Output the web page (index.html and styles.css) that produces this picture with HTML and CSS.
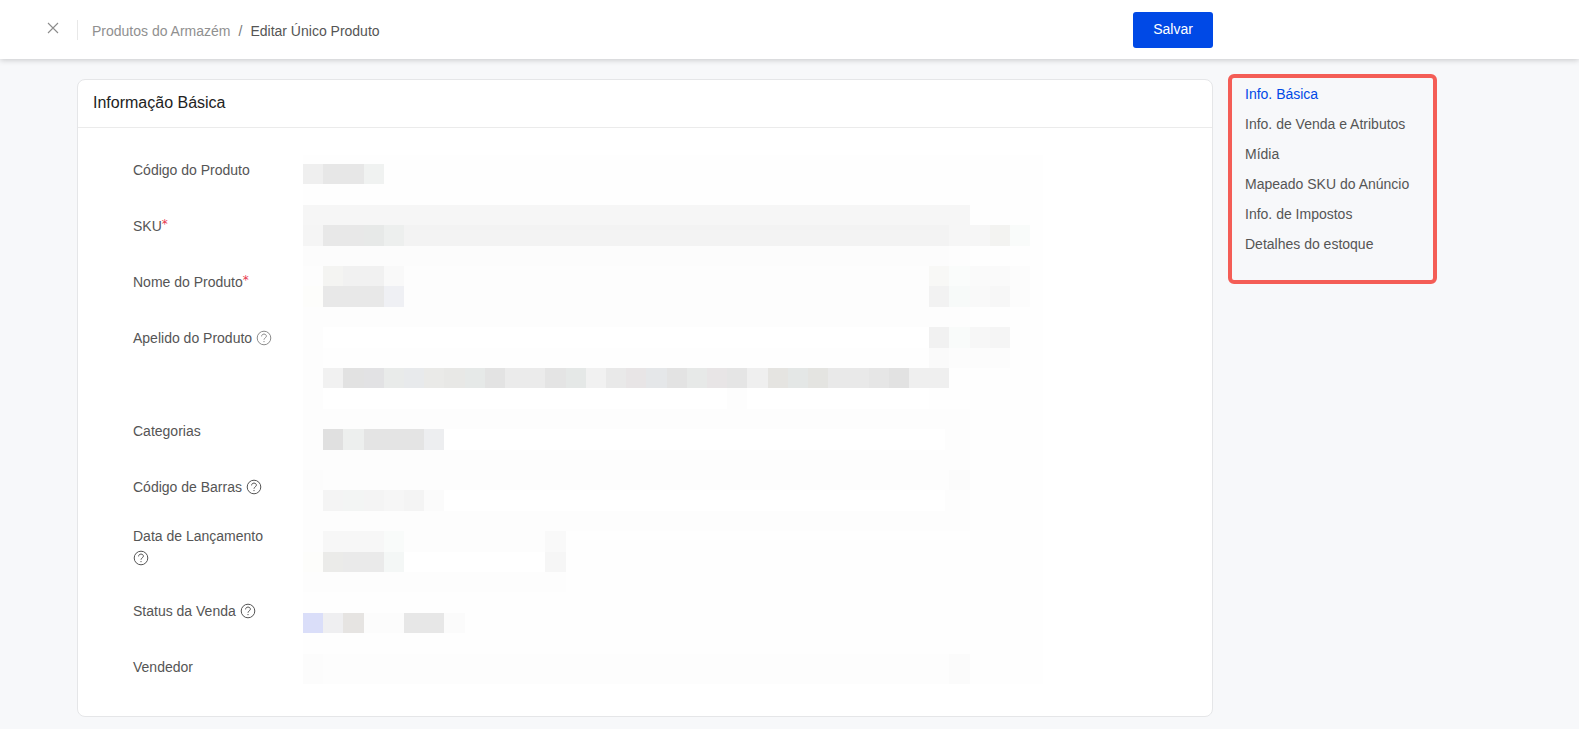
FILE: index.html
```html
<!DOCTYPE html>
<html lang="pt-BR">
<head>
<meta charset="utf-8">
<title>Editar Único Produto</title>
<link rel="stylesheet" href="styles.css">
</head>
<body>
<svg class="defs" aria-hidden="true">
  <symbol id="help" viewBox="0 0 16 16">
    <circle cx="8" cy="8" r="6.8" fill="none" stroke="currentColor" stroke-width="1"/>
    <path d="M5.6 6.400C5.600 4.900 6.600 4.100 8 4.100s2.400.8 2.400 2.100c0 1.600-2.400 1.700-2.400 3.500" fill="none" stroke="currentColor" stroke-width="1"/>
    <circle cx="8" cy="11.600" r=".7" fill="currentColor"/>
  </symbol>
</svg>
<header class="topbar">
  <button class="close" type="button" aria-label="Fechar">
    <svg viewBox="0 0 12 12" width="12" height="12"><path d="M1 1l10 10M11 1L1 11" stroke="currentColor" stroke-width="1.1" fill="none"/></svg>
  </button>
  <nav class="crumbs" aria-label="Navegação">
    <a class="crumb" href="#">Produtos do Armazém</a>
    <span class="slash">/</span>
    <span class="current">Editar Único Produto</span>
  </nav>
  <button class="save" type="button">Salvar</button>
</header>
<div class="page">
  <main class="card" id="basica">
    <h1 class="card-title">Informação Básica</h1>
    <div class="form">
      <div class="labels">
        <div class="label">Código do Produto</div>
        <div class="label">SKU<span class="req">*</span></div>
        <div class="label">Nome do Produto<span class="req">*</span></div>
        <div class="label label-area">Apelido do Produto <svg class="help help-light"><use href="#help"/></svg></div>
        <div class="label">Categorias</div>
        <div class="label">Código de Barras <svg class="help"><use href="#help"/></svg></div>
        <div class="label label-wrap">Data de Lançamento <svg class="help"><use href="#help"/></svg></div>
        <div class="label">Status da Venda <svg class="help"><use href="#help"/></svg></div>
        <div class="label">Vendedor</div>
      </div>
      <svg class="mosaic" viewBox="0 0 740 529" shape-rendering="crispEdges" aria-hidden="true">
        <rect width="740" height="529" fill="#fefefe"/>
        <g transform="translate(0 9) scale(20.200 20.400)">
          <!-- field areas -->
          <rect x="0" y="4" width="33" height="14" fill="#fdfdfd"/>
          <rect x="1" y="8" width="30" height="1" fill="#fff"/>
          <rect x="1" y="9" width="30" height="1" fill="#fefefe"/>
          <rect x="31" y="10" width="2" height="2" fill="#fefefe"/>
          <rect x="1" y="11" width="30" height="1" fill="#fff"/>
          <rect x="21" y="11" width="1" height="1" fill="#fdfdfd"/>
          <rect x="7" y="13" width="24.800" height="1" fill="#fff"/>
          <rect x="7" y="16" width="24.800" height="1" fill="#fff"/>
          <rect x="0" y="15" width="1" height="1" fill="#fcfcfc"/>
          <rect x="32" y="15" width="1" height="1" fill="#fbfbfb"/>
          <rect x="0" y="18" width="13" height="3" fill="#fdfdfd"/>
          <rect x="4" y="19" width="8" height="1" fill="#fff"/>
          <!-- product code -->
          <rect x="0" y="0" width="1" height="1" fill="#efefef"/>
          <rect x="1" y="0" width="2" height="1" fill="#e7e7e7"/>
          <rect x="3" y="0" width="1" height="1" fill="#f0f2f1"/>
          <!-- SKU -->
          <rect x="0" y="2" width="33" height="1" fill="#f6f6f6"/>
          <rect x="0" y="3" width="1" height="1" fill="#f5f5f5"/>
          <rect x="1" y="3" width="31" height="1" fill="#f3f3f3"/>
          <rect x="1" y="3" width="2" height="1" fill="#e8e8e8"/>
          <rect x="3" y="3" width="1" height="1" fill="#e7e9e8"/>
          <rect x="4" y="3" width="1" height="1" fill="#edefee"/>
          <rect x="32" y="3" width="2" height="1" fill="#f6f6f6"/>
          <rect x="34" y="3" width="1" height="1" fill="#f3f3f1"/>
          <rect x="35" y="3" width="1" height="1" fill="#f9fbfa"/>
          <rect x="0" y="4" width="32" height="1" fill="#fcfcfc"/>
          <!-- product name -->
          <rect x="1" y="5" width="1" height="1" fill="#f4f4f2"/>
          <rect x="2" y="5" width="2" height="1" fill="#f1f1f1"/>
          <rect x="4" y="5" width="1" height="1" fill="#f9f9f9"/>
          <rect x="0" y="6" width="1" height="1" fill="#fdfdfb"/>
          <rect x="1" y="6" width="3" height="1" fill="#e8e8e8"/>
          <rect x="4" y="6" width="1" height="1" fill="#eff0f4"/>
          <rect x="31" y="5" width="1" height="1" fill="#f8f8f6"/>
          <rect x="32" y="5" width="1" height="1" fill="#fafcfb"/>
          <rect x="33" y="5" width="2" height="1" fill="#fafafa"/>
          <rect x="35" y="5" width="1" height="2" fill="#fcfcfc"/>
          <rect x="31" y="6" width="1" height="1" fill="#f2f2f2"/>
          <rect x="32" y="6" width="1" height="1" fill="#f7faf9"/>
          <rect x="33" y="6" width="1" height="1" fill="#f9f9f9"/>
          <rect x="34" y="6" width="1" height="1" fill="#f7f7f7"/>
          <!-- nickname -->
          <rect x="31" y="8" width="1" height="1" fill="#f1f1f1"/>
          <rect x="32" y="8" width="1" height="1" fill="#f9fbfa"/>
          <rect x="33" y="8" width="1" height="1" fill="#f7f7f7"/>
          <rect x="34" y="8" width="1" height="1" fill="#f5f5f5"/>
          <rect x="31" y="9" width="1" height="1" fill="#fafafa"/>
          <rect x="32" y="9" width="3" height="1" fill="#fcfcfc"/>
          <rect x="1" y="10" width="1" height="1" fill="#f1f1f1"/>
          <rect x="2" y="10" width="1" height="1" fill="#e2e2e2"/>
          <rect x="3" y="10" width="1" height="1" fill="#e2e2e4"/>
          <rect x="4" y="10" width="1" height="1" fill="#e9ebea"/>
          <rect x="5" y="10" width="1" height="1" fill="#e8eaec"/>
          <rect x="6" y="10" width="1" height="1" fill="#eaeae8"/>
          <rect x="7" y="10" width="1" height="1" fill="#e8e8e6"/>
          <rect x="8" y="10" width="1" height="1" fill="#e6e9e8"/>
          <rect x="9" y="10" width="1" height="1" fill="#e3e3e3"/>
          <rect x="10" y="10" width="2" height="1" fill="#ebebeb"/>
          <rect x="12" y="10" width="1" height="1" fill="#e4e4e4"/>
          <rect x="13" y="10" width="1" height="1" fill="#e5e8e7"/>
          <rect x="14" y="10" width="1" height="1" fill="#f1f1f1"/>
          <rect x="15" y="10" width="1" height="1" fill="#e9e9e9"/>
          <rect x="16" y="10" width="1" height="1" fill="#e8e5e6"/>
          <rect x="17" y="10" width="1" height="1" fill="#e5e7e9"/>
          <rect x="18" y="10" width="1" height="1" fill="#e3e3e3"/>
          <rect x="19" y="10" width="1" height="1" fill="#e7e9e8"/>
          <rect x="20" y="10" width="1" height="1" fill="#e8e5e6"/>
          <rect x="21" y="10" width="1" height="1" fill="#e5e5e5"/>
          <rect x="22" y="10" width="1" height="1" fill="#efefef"/>
          <rect x="23" y="10" width="1" height="1" fill="#e5e4e1"/>
          <rect x="24" y="10" width="1" height="1" fill="#e4e7e6"/>
          <rect x="25" y="10" width="1" height="1" fill="#e4e4e1"/>
          <rect x="26" y="10" width="2" height="1" fill="#e9e9e9"/>
          <rect x="28" y="10" width="1" height="1" fill="#e6e6e6"/>
          <rect x="29" y="10" width="1" height="1" fill="#e2e2e2"/>
          <rect x="30" y="10" width="2" height="1" fill="#efefef"/>
          <!-- categories -->
          <rect x="1" y="13" width="1" height="1" fill="#e0e0e0"/>
          <rect x="2" y="13" width="1" height="1" fill="#edefee"/>
          <rect x="3" y="13" width="3" height="1" fill="#e4e4e4"/>
          <rect x="6" y="13" width="1" height="1" fill="#edeef0"/>
          <!-- barcode -->
          <rect x="1" y="16" width="1" height="1" fill="#f4f4f4"/>
          <rect x="2" y="16" width="1" height="1" fill="#f3f5f4"/>
          <rect x="3" y="16" width="1" height="1" fill="#f4f4f4"/>
          <rect x="4" y="16" width="1" height="1" fill="#f6f6f6"/>
          <rect x="5" y="16" width="1" height="1" fill="#f4f4f4"/>
          <rect x="6" y="16" width="1" height="1" fill="#fbfbfb"/>
          <!-- release date -->
          <rect x="1" y="18" width="3" height="1" fill="#f7f7f7"/>
          <rect x="4" y="18" width="1" height="1" fill="#f9fbfa"/>
          <rect x="0" y="19" width="1" height="1" fill="#fdfdfb"/>
          <rect x="1" y="19" width="1" height="1" fill="#ebebe9"/>
          <rect x="2" y="19" width="2" height="1" fill="#eaeaea"/>
          <rect x="4" y="19" width="1" height="1" fill="#f4f7f6"/>
          <rect x="12" y="18" width="1" height="1" fill="#f9f9f9"/>
          <rect x="12" y="19" width="1" height="1" fill="#f6f6f6"/>
          <!-- sale status -->
          <rect x="0" y="22" width="1" height="1" fill="#dadef9"/>
          <rect x="1" y="22" width="1" height="1" fill="#efeff1"/>
          <rect x="2" y="22" width="1" height="1" fill="#e6e4e2"/>
          <rect x="3" y="22" width="2" height="1" fill="#fcfcfc"/>
          <rect x="5" y="22" width="2" height="1" fill="#e7e7e7"/>
          <rect x="7" y="22" width="1" height="1" fill="#fbfbfb"/>
          <!-- seller -->
          <rect x="0" y="24" width="33" height="1.500" fill="#fdfdfd"/>
          <rect x="0" y="24" width="1" height="1.500" fill="#fcfcfc"/>
          <rect x="32" y="24" width="1" height="1.500" fill="#fbfbfb"/>
        </g>
      </svg>
    </div>
  </main>
  <aside class="side">
    <nav class="anchors" aria-label="Seções">
      <a class="anchor active" href="#basica">Info. Básica</a>
      <a class="anchor" href="#">Info. de Venda e Atributos</a>
      <a class="anchor" href="#">Mídia</a>
      <a class="anchor" href="#">Mapeado SKU do Anúncio</a>
      <a class="anchor" href="#">Info. de Impostos</a>
      <a class="anchor" href="#">Detalhes do estoque</a>
    </nav>
  </aside>
</div>
</body>
</html>
```
FILE: styles.css
```css
* {
  box-sizing: border-box;
}

body {
  margin: 0;
  background: #f7f8fa;
  color: #555;
  font: 14px/22px "Liberation Sans", Arial, sans-serif;
}

a {
  color: inherit;
  text-decoration: none;
}

button {
  border: 0;
  padding: 0;
  font: inherit;
  cursor: pointer;
}

.defs {
  display: block;
  width: 0;
  height: 0;
}

.topbar {
  display: flex;
  align-items: center;
  min-height: 59px;
  padding-right: 366px;
  background: #fff;
  box-shadow: 0 1px 6px rgba(0, 0, 0, 0.2);
}

.close {
  display: flex;
  justify-content: flex-end;
  align-items: center;
  width: 78px;
  height: 20px;
  padding: 0 18px 3px 0;
  border-right: 1px solid #e8e8e8;
  background: none;
  color: #8c8c8c;
}

.crumbs {
  display: flex;
  flex: 1;
  gap: 8px;
  padding: 3px 0 0 14px;
}

.crumb {
  color: #909090;
}

.slash {
  color: #777;
}

.save {
  width: 80px;
  height: 36px;
  padding-bottom: 2px;
  border-radius: 3px;
  background: #0049e6;
  color: #fff;
}

.page {
  display: flex;
  align-items: flex-start;
  gap: 15px;
  padding: 0 78px 12px 77px;
}

.card {
  flex: 1;
  margin-top: 20px;
  border: 1px solid #e5e6e8;
  border-radius: 8px;
  background: #fff;
}

.card-title {
  margin: 0;
  padding: 11px 15px 13px;
  border-bottom: 1px solid #ebebeb;
  color: #222;
  font-size: 16px;
  font-weight: 400;
  line-height: 23px;
}

.form {
  display: grid;
  grid-template-columns: 144px 1fr;
  gap: 26px;
  padding: 14px 55px 21px;
}

.label {
  min-height: 56px;
  padding: 17px 0;
}

.label-area {
  min-height: 93px;
}

.label-wrap {
  min-height: 68px;
  padding: 10px 0 14px;
}

.req {
  color: #e8384f;
  font-family: "DejaVu Sans", sans-serif;
  font-size: 12px;
  line-height: 0;
  vertical-align: 3px;
}

.help {
  width: 16px;
  height: 16px;
  vertical-align: -3px;
}

.help-light {
  color: #8c8c8c;
}

.mosaic {
  width: 100%;
  max-width: 740px;
  margin-top: 13px;
}

.side {
  flex: 0 0 273px;
  padding-top: 15px;
}

.anchors {
  display: flex;
  flex-direction: column;
  width: 209px;
  padding: 1px 13px 21px;
  border: 4px solid #f45d56;
  border-radius: 6px;
}

.anchor {
  line-height: 30px;
}

.anchor.active {
  color: #0049e6;
}
```
